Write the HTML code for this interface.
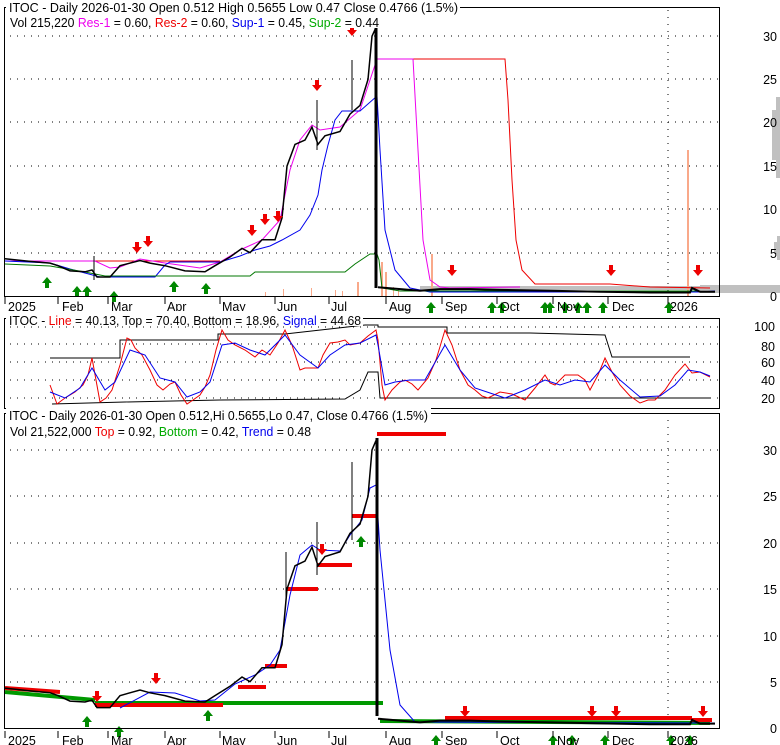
<!DOCTYPE html>
<html><head><meta charset="utf-8"><style>
html,body{margin:0;padding:0;background:#fff}
svg{display:block}
text{font-family:"Liberation Sans",sans-serif;font-size:12.5px}
</style></head><body>
<svg width="780" height="745" viewBox="0 0 780 745" xmlns="http://www.w3.org/2000/svg">
<defs>
<path id="dn" d="M-2,-9 h4 v5 h3 l-5,6 l-5,-6 h3z" fill="#e00"/>
<path id="up" d="M-2,9 h4 v-5 h3 l-5,-6 l-5,6 h3z" fill="#080"/>
</defs>
<!-- TOP PANEL -->
<g stroke="#000" stroke-width="1" stroke-dasharray="1,6" fill="none">
<line x1="10" y1="36" x2="719" y2="36"/><line x1="10" y1="79" x2="719" y2="79"/><line x1="10" y1="122" x2="719" y2="122"/><line x1="10" y1="166" x2="719" y2="166"/><line x1="10" y1="209" x2="719" y2="209"/><line x1="10" y1="253" x2="719" y2="253"/>
<line x1="668" y1="10" x2="668" y2="296"/>
</g>
<!-- volume profile -->
<g fill="#c0c0c0">
<rect x="776" y="97" width="4" height="81"/><rect x="772" y="110" width="8" height="50"/><rect x="777" y="236" width="3" height="24"/><rect x="774" y="242" width="6" height="12"/>
<rect x="420" y="286" width="300" height="4"/><rect x="700" y="285" width="80" height="8"/>
</g>
<!-- volume bars -->
<g fill="#f9a98a">
<rect x="687" y="150" width="2" height="146"/><rect x="431" y="254" width="2" height="42"/>
<rect x="381" y="262" width="2" height="34"/><rect x="385" y="272" width="2" height="24"/>
<rect x="357" y="282" width="2" height="14"/><rect x="311" y="288" width="1" height="8"/><rect x="283" y="289" width="1" height="7"/>
<rect x="335" y="290" width="1" height="6"/><rect x="342" y="291" width="1" height="5"/><rect x="265" y="292" width="1" height="4"/><rect x="393" y="287" width="1" height="9"/><rect x="398" y="289" width="1" height="7"/>
</g>
<!-- S/R lines -->
<polyline fill="none" stroke="#e00" stroke-width="1" points="5,261 220,261"/>
<polyline fill="none" stroke="#e00" stroke-width="1" points="377,59 505,59 508,100 512,180 516,240 522,270 535,284 610,284 650,287 710,288"/>
<polyline fill="none" stroke="#e0e" stroke-width="1" points="5,261 95,261 110,268 120,267 140,259 165,263 200,268 220,262 240,250 262,240 280,220 290,170 300,140 312,125 320,130 340,127 360,110 370,80 377,59 413,59 418,150 423,240 430,280 440,287 450,288 520,287"/>
<polyline fill="none" stroke="#00e" stroke-width="1" points="5,261 50,263 70,269 100,277 120,277 155,277 165,265 170,262 200,262 220,262 240,256 255,250 270,246 282,240 300,230 310,215 318,195 322,170 328,145 335,120 342,111 360,111 377,96 380,150 385,230 395,270 410,288 430,292 700,292 715,291"/>
<polyline fill="none" stroke="#070" stroke-width="1" points="5,264 50,266 85,272 105,276 250,276 255,272 345,272 355,264 370,254 377,254 379,260 382,288 400,291 700,291"/>
<!-- price -->
<polyline fill="none" stroke="#000" stroke-width="1.5" points="5,258.8 30,261.4 50,263.1 58,265.7 70,270.9 85,271.8 92,270 97,277 110,277 120,265.7 140,260.5 150,263.1 165,265.7 185,270.9 205,271.8 215,265.7 230,257 242,248.4 250,252.7 262,239.7 275,239.7 282,218 287,166.1 295,144.4 305,140.1 312,127.1 318,144.4 325,135.8 340,131.5 350,114.1 360,105.5 368,79.5 372,36.2 376,27.5"/>
<polyline fill="none" stroke="#000" stroke-width="2" points="378,287.3 390,288.2 420,290.8 440,289.1 470,289.1 500,289.9 550,290.8 600,291.7 650,292.5 690,292.5 692,288 700,291.7 715,291.8"/>
<line x1="376" y1="28" x2="376" y2="288" stroke="#000" stroke-width="3"/>
<line x1="352" y1="60" x2="352" y2="110" stroke="#000"/><line x1="317" y1="100" x2="317" y2="150" stroke="#000"/><line x1="94" y1="256" x2="94" y2="280" stroke="#000"/>
<g>
<use href="#dn" x="137" y="251"/><use href="#dn" x="148" y="245"/><use href="#dn" x="252" y="234"/><use href="#dn" x="265" y="223"/><use href="#dn" x="278" y="220"/><use href="#dn" x="317" y="89"/><use href="#dn" x="352" y="34"/><use href="#dn" x="452" y="274"/><use href="#dn" x="611" y="274"/><use href="#dn" x="698" y="274"/>
<use href="#up" x="47" y="279"/><use href="#up" x="77" y="288"/><use href="#up" x="87" y="288"/><use href="#up" x="114" y="293"/><use href="#up" x="174" y="283"/><use href="#up" x="206" y="285"/><use href="#up" x="431" y="304"/><use href="#up" x="492" y="304"/><use href="#up" x="502" y="304"/><use href="#up" x="545" y="304"/><use href="#up" x="550" y="304"/><use href="#up" x="565" y="304"/><use href="#up" x="578" y="304"/><use href="#up" x="587" y="304"/><use href="#up" x="603" y="304"/><use href="#up" x="669" y="304"/>
</g>
<rect x="4.5" y="7.5" width="715" height="289" fill="none" stroke="#000"/>
<rect x="6" y="0" width="454" height="14" fill="#fff"/><rect x="6" y="14" width="376" height="14" fill="#fff"/>
<text x="9" y="12" textLength="449" lengthAdjust="spacingAndGlyphs">ITOC - Daily 2026-01-30 Open 0.512  High 0.5655  Low 0.47  Close 0.4766 (1.5%)</text>
<text x="10" y="27" textLength="369" lengthAdjust="spacingAndGlyphs">Vol 215,220 <tspan fill="#e0e">Res-1</tspan> = 0.60, <tspan fill="#e00">Res-2</tspan> = 0.60, <tspan fill="#00e">Sup-1</tspan> = 0.45, <tspan fill="#0a0">Sup-2</tspan> = 0.44</text>
<g text-anchor="end"><text x="777" y="41">30</text><text x="777" y="84">25</text><text x="777" y="127">20</text><text x="777" y="171">15</text><text x="777" y="214">10</text><text x="777" y="258">5</text><text x="777" y="301">0</text></g>
<g stroke="#000"><line x1="5" y1="297" x2="5" y2="304"/><line x1="58" y1="297" x2="58" y2="304"/><line x1="108" y1="297" x2="108" y2="304"/><line x1="165" y1="297" x2="165" y2="304"/><line x1="220" y1="297" x2="220" y2="304"/><line x1="275" y1="297" x2="275" y2="304"/><line x1="329" y1="297" x2="329" y2="304"/><line x1="386" y1="297" x2="386" y2="304"/><line x1="442" y1="297" x2="442" y2="304"/><line x1="497" y1="297" x2="497" y2="304"/><line x1="553" y1="297" x2="553" y2="304"/><line x1="608" y1="297" x2="608" y2="304"/><line x1="668" y1="297" x2="668" y2="304"/></g>
<g><text x="8" y="311">2025</text><text x="62" y="311">Feb</text><text x="111" y="311">Mar</text><text x="167" y="311">Apr</text><text x="222" y="311">May</text><text x="277" y="311">Jun</text><text x="331" y="311">Jul</text><text x="389" y="311">Aug</text><text x="445" y="311">Sep</text><text x="500" y="311">Oct</text><text x="557" y="311">Nov</text><text x="612" y="311">Dec</text><text x="670" y="311">2026</text></g>

<!-- MIDDLE PANEL -->
<g stroke="#000" stroke-dasharray="1,6"><line x1="10" y1="327" x2="719" y2="327"/><line x1="10" y1="344" x2="719" y2="344"/><line x1="10" y1="362" x2="719" y2="362"/><line x1="10" y1="380" x2="719" y2="380"/><line x1="10" y1="398" x2="719" y2="398"/></g>
<polyline fill="none" stroke="#000" points="50,358 120,358 120,340 218,340 218,334 285,334 365,325 378,325 378,327 447,327 447,333 530,333 605,335 612,357 690,357"/>
<polyline fill="none" stroke="#000" points="52,404 125,402 220,400 345,399 360,390 368,372 378,372 380,398 710,398"/>
<polyline fill="none" stroke="#e00" points="50,385 57,404 65,398 75,392 83,385 88,375 92,358 96,380 100,402 106,398 112,390 120,365 127,338 131,340 135,348 142,355 150,370 157,385 163,390 170,384 175,382 181,395 187,404 193,400 200,395 205,387 210,375 216,350 222,330 228,340 235,345 245,350 255,357 262,350 270,355 278,343 285,330 292,345 300,370 305,368 318,368 323,355 330,343 338,342 345,340 350,345 355,344 360,343 368,336 376,330 378,340 382,385 385,400 392,390 400,382 405,380 412,384 418,390 428,378 436,360 445,330 452,345 460,370 468,385 475,390 482,396 488,398 500,392 512,394 525,400 535,388 545,375 550,383 555,385 565,375 578,375 585,380 590,390 598,375 605,358 612,372 620,385 630,396 640,403 648,400 655,400 665,390 675,375 685,364 692,373 700,372 710,377"/>
<polyline fill="none" stroke="#00e" points="50,392 65,398 80,388 92,368 105,390 115,382 130,350 145,355 160,378 175,382 187,397 200,392 210,382 222,345 235,343 250,350 265,355 285,335 300,355 318,368 330,355 345,345 360,343 376,335 378,345 385,385 395,382 410,380 425,380 445,345 460,370 475,388 490,393 505,398 525,390 545,380 560,385 575,380 590,382 605,365 620,380 640,397 660,396 675,385 688,370 700,372 710,376"/>
<rect x="4.5" y="318.5" width="715" height="90" fill="none" stroke="#000"/>
<rect x="6" y="311" width="357" height="15" fill="#fff"/>
<text x="9" y="325" textLength="352" lengthAdjust="spacingAndGlyphs">ITOC - <tspan fill="#e00">Line</tspan> = 40.13, Top = 70.40, Bottom = 18.96, <tspan fill="#00e">Signal</tspan> = 44.68</text>
<g text-anchor="end"><text x="775" y="331">100</text><text x="775" y="351">80</text><text x="775" y="367">60</text><text x="775" y="385">40</text><text x="775" y="403">20</text></g>

<!-- BOTTOM PANEL -->
<g stroke="#000" stroke-dasharray="1,6"><line x1="10" y1="450" x2="719" y2="450"/><line x1="10" y1="496" x2="719" y2="496"/><line x1="10" y1="543" x2="719" y2="543"/><line x1="10" y1="589" x2="719" y2="589"/><line x1="10" y1="636" x2="719" y2="636"/><line x1="10" y1="682" x2="719" y2="682"/><line x1="668" y1="420" x2="668" y2="728"/></g>
<g stroke="#090" stroke-width="4"><line x1="95" y1="703" x2="383" y2="703"/><line x1="5" y1="692" x2="95" y2="700"/><line x1="380" y1="721" x2="710" y2="723"/></g>
<g stroke="#e00" stroke-width="4"><line x1="95" y1="705" x2="223" y2="705"/><line x1="238" y1="687" x2="266" y2="687"/><line x1="265" y1="666" x2="287" y2="666"/><line x1="286" y1="589" x2="318" y2="589"/><line x1="318" y1="565" x2="352" y2="565"/><line x1="352" y1="516" x2="377" y2="516"/><line x1="377" y1="434" x2="446" y2="434"/><line x1="445" y1="718" x2="692" y2="718"/><line x1="692" y1="720" x2="712" y2="720"/><line x1="5" y1="688" x2="60" y2="692"/></g>
<polyline fill="none" stroke="#00e" points="120,708 150,692 175,693 200,701 215,700 235,684 255,675 270,665 280,650 290,595 300,555 312,545 320,550 340,551 350,535 362,520 370,488 376,485 380,550 390,650 400,705 415,722 700,723 715,723"/>
<polyline fill="none" stroke="#000" stroke-width="1.5" points="5,688.1 30,690.9 50,692.8 58,695.6 70,701.1 85,702 92,700.2 97,707.6 110,707.6 120,695.6 140,690 150,692.8 165,695.6 185,701.1 205,702 215,695.6 230,686.3 242,677 250,681.7 262,667.7 275,667.7 282,644.6 287,589 295,565.8 305,561.1 312,547.2 318,565.8 325,556.5 340,551.9 350,533.3 360,524.1 368,496.3 372,449.9 376,440.6"/>
<polyline fill="none" stroke="#000" stroke-width="2" points="378,718.7 390,719.7 420,722.4 440,720.6 470,720.6 500,721.5 550,722.4 600,723.4 650,724.3 690,724.3 692,720 700,723.6 715,723.6"/>
<line x1="377" y1="438" x2="377" y2="716" stroke="#000" stroke-width="3"/>
<line x1="352" y1="462" x2="352" y2="540" stroke="#000"/><line x1="317" y1="522" x2="317" y2="575" stroke="#000"/><line x1="286" y1="552" x2="286" y2="600" stroke="#000"/>
<g>
<use href="#dn" x="97" y="700"/><use href="#dn" x="156" y="682"/><use href="#dn" x="322" y="553"/><use href="#dn" x="465" y="715"/><use href="#dn" x="592" y="715"/><use href="#dn" x="616" y="715"/><use href="#dn" x="703" y="715"/>
<use href="#up" x="87" y="718"/><use href="#up" x="119" y="728"/><use href="#up" x="208" y="712"/><use href="#up" x="361" y="538"/><use href="#up" x="436" y="737"/><use href="#up" x="553" y="737"/><use href="#up" x="572" y="737"/><use href="#up" x="605" y="737"/><use href="#up" x="671" y="737"/><use href="#up" x="690" y="737"/>
</g>
<rect x="4.5" y="413.5" width="715" height="315" fill="none" stroke="#000"/>
<rect x="6" y="406" width="425" height="15" fill="#fff"/><rect x="6" y="423" width="308" height="15" fill="#fff"/>
<text x="9" y="420" textLength="419" lengthAdjust="spacingAndGlyphs">ITOC - Daily 2026-01-30 Open 0.512,Hi 0.5655,Lo 0.47, Close 0.4766 (1.5%)</text>
<text x="10" y="436" textLength="301" lengthAdjust="spacingAndGlyphs">Vol 21,522,000 <tspan fill="#e00">Top</tspan> = 0.92, <tspan fill="#0a0">Bottom</tspan> = 0.42, <tspan fill="#00e">Trend</tspan> = 0.48</text>
<g text-anchor="end"><text x="777" y="455">30</text><text x="777" y="501">25</text><text x="777" y="548">20</text><text x="777" y="594">15</text><text x="777" y="641">10</text><text x="777" y="687">5</text><text x="777" y="733">0</text></g>
<g stroke="#000"><line x1="5" y1="731" x2="5" y2="738"/><line x1="58" y1="731" x2="58" y2="738"/><line x1="108" y1="731" x2="108" y2="738"/><line x1="165" y1="731" x2="165" y2="738"/><line x1="220" y1="731" x2="220" y2="738"/><line x1="275" y1="731" x2="275" y2="738"/><line x1="329" y1="731" x2="329" y2="738"/><line x1="386" y1="731" x2="386" y2="738"/><line x1="442" y1="731" x2="442" y2="738"/><line x1="497" y1="731" x2="497" y2="738"/><line x1="553" y1="731" x2="553" y2="738"/><line x1="608" y1="731" x2="608" y2="738"/><line x1="668" y1="731" x2="668" y2="738"/></g>
<g><text x="8" y="745">2025</text><text x="62" y="745">Feb</text><text x="111" y="745">Mar</text><text x="167" y="745">Apr</text><text x="222" y="745">May</text><text x="277" y="745">Jun</text><text x="331" y="745">Jul</text><text x="389" y="745">Aug</text><text x="445" y="745">Sep</text><text x="500" y="745">Oct</text><text x="557" y="745">Nov</text><text x="612" y="745">Dec</text><text x="670" y="745">2026</text></g>
</svg>
</body></html>
